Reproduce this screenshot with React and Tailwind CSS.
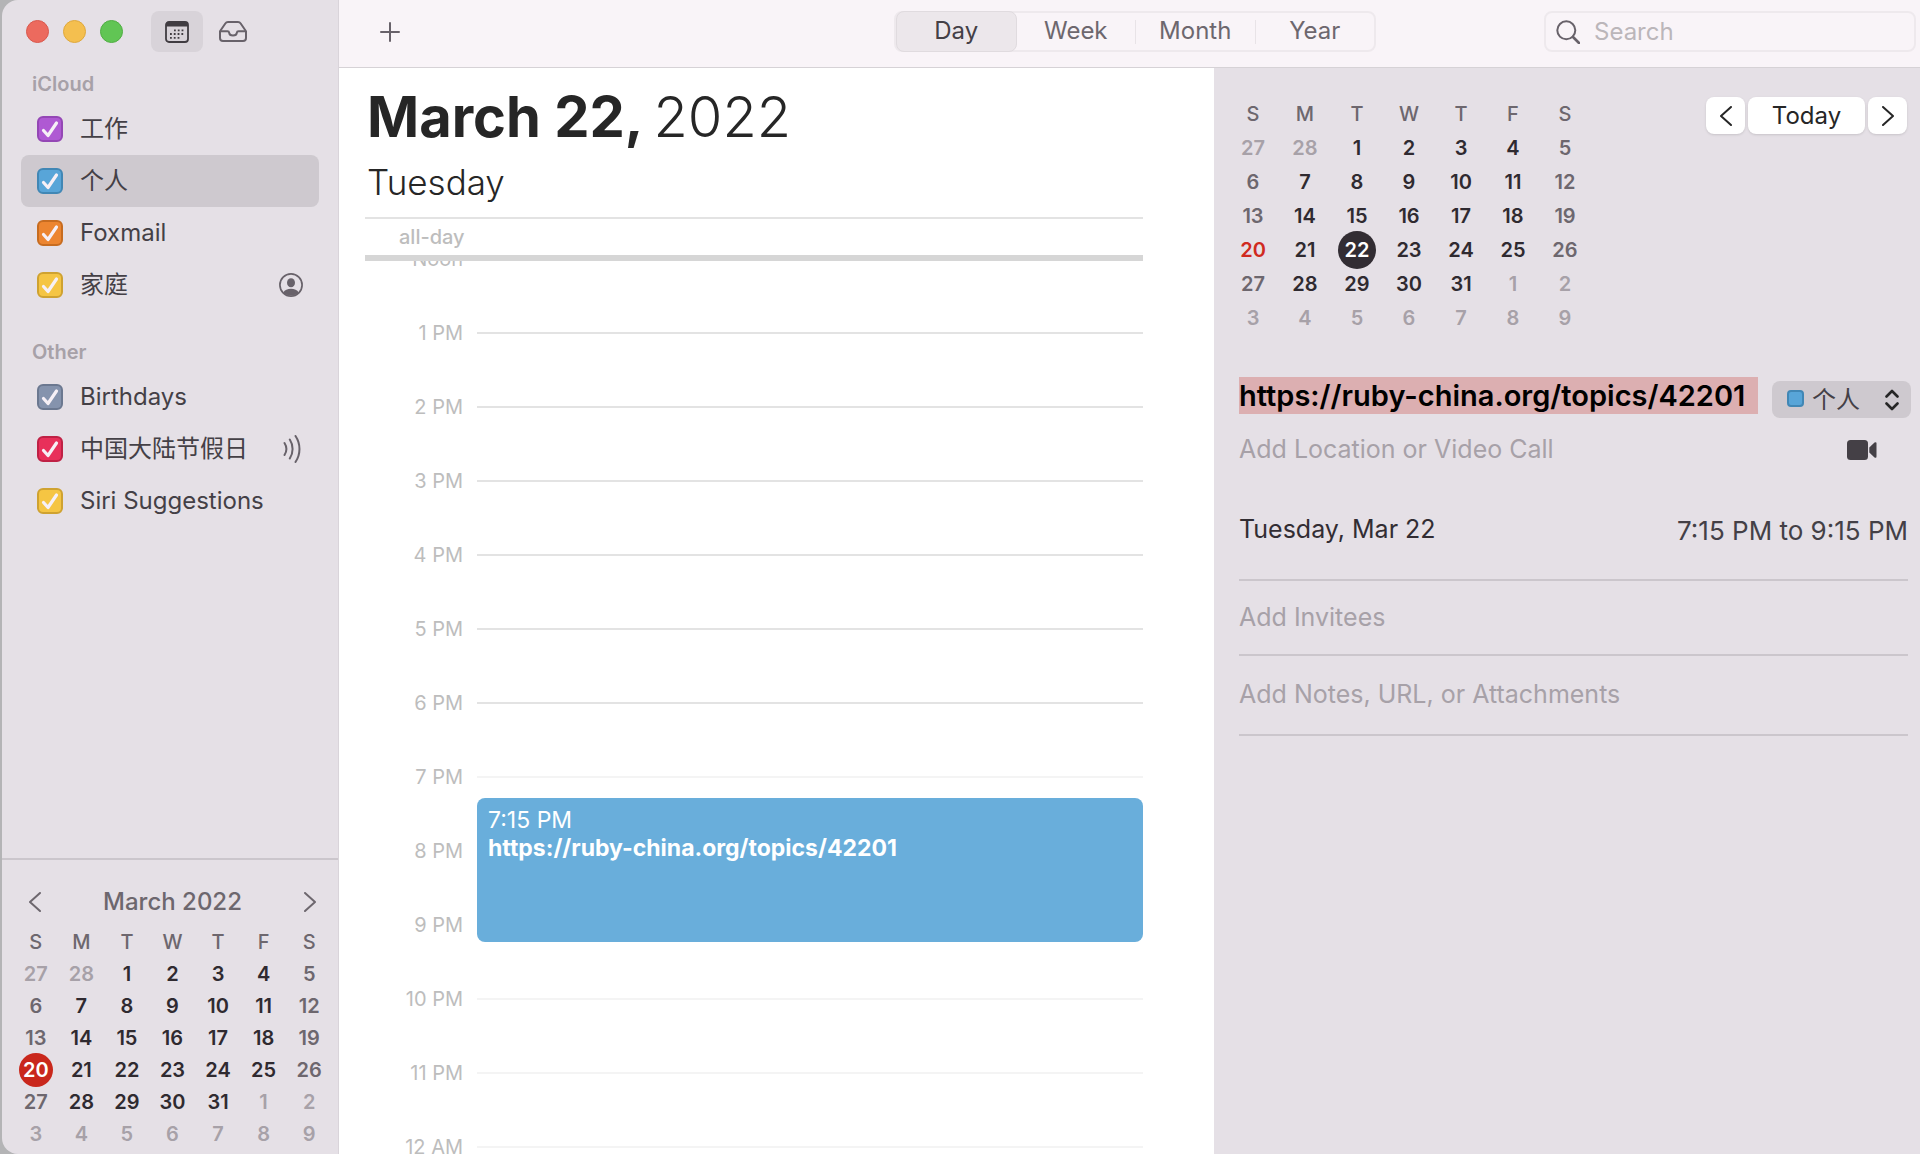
import React, { useState } from 'react';

const weekdays = ['S', 'M', 'T', 'W', 'T', 'F', 'S'];

// negative numbers are days of the neighbouring months
const weeks = [
  [-27, -28, 1, 2, 3, 4, 5],
  [6, 7, 8, 9, 10, 11, 12],
  [13, 14, 15, 16, 17, 18, 19],
  [20, 21, 22, 23, 24, 25, 26],
  [27, 28, 29, 30, 31, -1, -2],
  [-3, -4, -5, -6, -7, -8, -9]
];

const groups = [
  {
    name: 'iCloud',
    items: [
      { id: 'work', label: '工作', color: 'bg-[#af59d3] border-[#9447b5]' },
      { id: 'personal', label: '个人', color: 'bg-[#58a5d8] border-[#4187b5]', selected: true },
      { id: 'foxmail', label: 'Foxmail', color: 'bg-[#ec8530] border-[#c76c20]' },
      { id: 'family', label: '家庭', color: 'bg-[#f5c543] border-[#cfa230]', icon: 'person' }
    ]
  },
  {
    name: 'Other',
    items: [
      { id: 'birthdays', label: 'Birthdays', color: 'bg-[#8593ad] border-[#6b7890]' },
      { id: 'holidays', label: '中国大陆节假日', color: 'bg-[#e8305a] border-[#bf2145]', icon: 'waves' },
      { id: 'siri', label: 'Siri Suggestions', color: 'bg-[#f5c543] border-[#cfa230]' }
    ]
  }
];

const hours = ['Noon', '1 PM', '2 PM', '3 PM', '4 PM', '5 PM', '6 PM', '7 PM', '8 PM', '9 PM', '10 PM', '11 PM', '12 AM'];

const Chevron = ({ left, className }) => (
  <svg viewBox="0 0 12 20" fill="none" stroke="currentColor" strokeLinecap="round" strokeLinejoin="round" className={className}>
    <path d={left ? 'M11 1 1 10l10 9' : 'M1 1l10 9-10 9'} />
  </svg>
);

const PersonIcon = () => (
  <svg viewBox="0 0 24 24" className="size-6 mr-4 text-[#68626a]">
    <circle cx="12" cy="12" r="11.1" fill="none" stroke="currentColor" strokeWidth="1.7" />
    <ellipse cx="12" cy="9.8" rx="4" ry="4.5" fill="currentColor" />
    <path d="M4.3 19.4c1.4-2.4 4.3-3.6 7.7-3.6s6.3 1.2 7.7 3.6a11 11 0 0 1-15.4 0z" fill="currentColor" />
  </svg>
);

const WavesIcon = () => (
  <svg viewBox="0 0 20 28" fill="none" stroke="currentColor" strokeWidth="2" strokeLinecap="round" className="w-5 h-7 mr-4 text-[#68626a]">
    <path d="M1.500 8c2.300 3.600 2.300 8.400 0 12M6.800 4.500c3.700 5.700 3.700 13.300 0 19M12.500 1c5.300 7.800 5.300 18.200 0 26" />
  </svg>
);

const MiniCalendar = ({ large }) => {
  const dayClass = (day, col) => {
    if (large && day === 22) return 'size-[38px] -my-0.5 rounded-full bg-[#322d33] text-white';
    if (!large && day === 20) return 'size-[34px] -my-px rounded-full bg-[#c9271c] text-white';
    if (day === 20) return 'text-[#d02a20]';
    if (day < 0) return 'text-[#a7a1a8]';
    if (col === 0 || col === 6) return 'text-[#6d676e]';
    return 'text-[#2f2a30]';
  };

  return (
    <table className={`table-fixed text-center text-xl leading-6 font-semibold ${large ? 'w-[364px]' : 'w-full'}`}>
      <thead>
        <tr className={large ? 'h-[34px]' : 'h-8'}>
          {weekdays.map((name, i) => (
            <th key={i} className="p-0 font-medium text-[#6d676e]">{name}</th>
          ))}
        </tr>
      </thead>
      <tbody>
        {weeks.map((week, row) => (
          <tr key={row} className={large ? 'h-[34px]' : 'h-8'}>
            {week.map((day, col) => (
              <td key={col} className="p-0">
                <button className={`flex items-center justify-center mx-auto ${dayClass(day, col)}`}>
                  {Math.abs(day)}
                </button>
              </td>
            ))}
          </tr>
        ))}
      </tbody>
    </table>
  );
};

const CalendarRow = ({ item }) => (
  <li className={`flex items-center h-[52px] pl-4 rounded-lg ${item.selected ? 'bg-[#cec9cf]' : ''}`}>
    <label className="flex flex-1 items-center gap-[17px] text-[#444046]">
      <span className="relative size-[26px]">
        <input type="checkbox" defaultChecked className={`block size-[26px] appearance-none rounded-md border-2 ${item.color}`} />
        <svg viewBox="0 0 26 26" fill="none" stroke="#f6f0f6" strokeWidth="3.2" strokeLinecap="round" strokeLinejoin="round" className="absolute inset-0 pointer-events-none">
          <path d="M6.500 14.500l4.500 5L19.500 7" />
        </svg>
      </span>
      <span>{item.label}</span>
    </label>
    {item.icon === 'person' && <PersonIcon />}
    {item.icon === 'waves' && <WavesIcon />}
  </li>
);

const Sidebar = () => (
  <aside className="flex flex-col w-[337px] shrink-0 bg-[#e5e0e6] border-r border-[#d9d4da]">
    <div className="flex items-center h-[63px] pl-6">
      <div className="flex gap-[14px]">
        <button aria-label="Close" className="size-[23px] rounded-full bg-[#ec6a5e] border border-[#d9584d]" />
        <button aria-label="Minimize" className="size-[23px] rounded-full bg-[#f4bf4f] border border-[#dfa83c]" />
        <button aria-label="Zoom" className="size-[23px] rounded-full bg-[#61c554] border border-[#50ae43]" />
      </div>
      <button aria-label="Calendars" className="flex items-center justify-center w-[52px] h-[41px] ml-7 rounded-lg bg-[#d8d3d9] text-[#403c41]">
        <svg viewBox="0 0 24 22" className="w-6 h-[22px]">
          <rect x="1" y="1" width="22" height="20" rx="3" fill="none" stroke="currentColor" strokeWidth="1.8" />
          <path d="M1 3.500Q1 1 3.500 1h17Q23 1 23 3.500V5.600H1z" fill="currentColor" />
          <path d="M9 9.300h11M5 13h15M5 16.800h11" stroke="currentColor" strokeWidth="1.8" strokeDasharray="1.8 2" />
        </svg>
      </button>
      <button aria-label="Inbox" className="ml-4 text-[#68626a]">
        <svg viewBox="0 0 28 21" fill="none" stroke="currentColor" strokeWidth="2" strokeLinejoin="round" className="w-7 h-[21px]">
          <path d="M1 10.300 6.300 2.500Q7.300 1 9 1h10q1.700 0 2.700 1.500L27 10.300V17q0 3-3 3H4q-3 0-3-3z" />
          <path d="M1 10.300h7.500q1.500 0 1.700 1.500c.3 3.500 7.300 3.500 7.600 0q.2-1.500 1.700-1.500H27" />
        </svg>
      </button>
    </div>

    <nav className="flex-1 px-[19px] text-2xl">
      {groups.map((group) => (
        <section key={group.name} className="mb-5">
          <h2 className="h-10 pl-[11px] text-xl leading-[42px] font-semibold text-[#a7a1a8]">{group.name}</h2>
          <ul>
            {group.items.map((item) => (
              <CalendarRow key={item.id} item={item} />
            ))}
          </ul>
        </section>
      ))}
    </nav>

    <div className="pl-[11px] pr-1.5 pb-1 border-t-2 border-[#cbc6cc]">
      <div className="flex items-center justify-between h-[66px] px-4 pt-[18px] text-[#6d676e]">
        <button aria-label="Previous month">
          <Chevron left className="w-3 h-5 stroke-2" />
        </button>
        <h2 className="text-2xl font-medium">March 2022</h2>
        <button aria-label="Next month">
          <Chevron className="w-3 h-5 stroke-2" />
        </button>
      </div>
      <MiniCalendar />
    </div>
  </aside>
);

const Toolbar = () => {
  const [view, setView] = useState('Day');

  return (
    <header className="flex items-center h-[68px] pl-[15px] pr-1 pb-1 shrink-0 bg-[#f9f4f8] border-b border-[#d6d2d6] text-2xl">
      <div className="flex flex-1">
        <button aria-label="New event" className="ml-[26px] text-[#68626a]">
          <svg viewBox="0 0 20 20" stroke="currentColor" strokeWidth="2" strokeLinecap="round" className="size-5">
            <path d="M10 1v18M1 10h18" />
          </svg>
        </button>
      </div>
      <div className="flex items-center w-[482px] h-[41px] border-2 border-[#eee9ed] rounded-lg">
        {['Day', 'Week', 'Month', 'Year'].map((name, i) => (
          <React.Fragment key={name}>
            {i > 1 && <span className="w-px h-6 bg-[#e8e3e7]" />}
            <button
              onClick={() => setView(name)}
              className={`flex-1 h-[41px] pb-0.5 rounded-lg ${
                view === name ? 'bg-[#ece7eb] border border-[#e0dbdf] text-[#444046]' : 'text-[#6d676e]'
              }`}
            >
              {name}
            </button>
          </React.Fragment>
        ))}
      </div>
      <div className="flex flex-1 justify-end">
        <label className="flex items-center gap-[14px] w-[372px] h-[41px] px-[10px] border-2 border-[#eee9ed] rounded-lg">
          <svg viewBox="0 0 24 24" fill="none" stroke="#68626a" strokeLinecap="round" className="size-6 shrink-0">
            <circle cx="10.3" cy="10.3" r="9" strokeWidth="2" />
            <path d="M17 17l6 6" strokeWidth="2.6" />
          </svg>
          <input type="search" aria-label="Search" placeholder="Search" className="flex-1 min-w-0 bg-transparent outline-none placeholder:text-[#bbb6ba]" />
        </label>
      </div>
    </header>
  );
};

const DayView = () => (
  <main className="flex flex-col flex-1 min-w-0 pl-[26px] pr-[71px] bg-white text-[#262626]">
    <h1 className="flex gap-2.5 pt-4 pl-0.5 text-[56px] leading-[66px] font-light">
      <strong className="font-bold">March 22,</strong>
      <span>2022</span>
    </h1>
    <p className="h-[67px] pl-0.5 text-[35px] leading-[64px] font-light">Tuesday</p>
    <div className="h-[38px] pl-[34px] border-t-2 border-[#e3e3e3] text-xl leading-9 font-medium text-[#bdbdbd]">all-day</div>
    <div className="h-1.5 shrink-0 bg-[#d6d6d6]" />
    <div className="flex-1 min-h-0 overflow-hidden">
      <div className="relative -mt-[39px]">
        {hours.map((hour, i) => (
          <div key={hour} className="flex items-center gap-[14px] h-[74px]">
            <span className="w-[98px] text-right text-xl text-[#bdbdbd]">{hour}</span>
            {i > 0 && <span className={`flex-1 h-0.5 ${i < 7 ? 'bg-[#e3e3e3]' : 'bg-[#f4f4f4]'}`} />}
          </div>
        ))}
        <article className="absolute top-[576px] left-28 right-0 h-36 px-[11px] pt-2 rounded-lg bg-[#69aedb] text-white text-[23px] leading-7">
          <p>7:15 PM</p>
          <h3 className="font-bold">https://ruby-china.org/topics/42201</h3>
        </article>
      </div>
    </div>
  </main>
);

const Inspector = () => (
  <aside className="w-[706px] shrink-0 pl-[25px] pr-[9px] bg-[#e5e0e6] text-[25px]">
    <div className="flex items-start justify-between pt-[29px] pr-1">
      <div className="-ml-3">
        <MiniCalendar large />
      </div>
      <div className="flex gap-[3px] text-2xl text-[#262626]">
        <button aria-label="Previous day" className="flex items-center justify-center w-[39px] h-[37px] rounded-lg bg-white shadow-sm">
          <Chevron left className="w-3 h-5 stroke-2" />
        </button>
        <button className="w-[117px] h-[37px] rounded-lg bg-white shadow-sm">Today</button>
        <button aria-label="Next day" className="flex items-center justify-center w-[39px] h-[37px] rounded-lg bg-white shadow-sm">
          <Chevron className="w-3 h-5 stroke-2" />
        </button>
      </div>
    </div>

    <div className="flex items-start gap-[14px] mt-[42px]">
      <input
        aria-label="Event title"
        defaultValue="https://ruby-china.org/topics/42201"
        className="flex-1 min-w-0 h-[37px] bg-[#dcafb1] text-[29px] font-semibold text-black outline-none"
      />
      <div className="relative mt-1 text-[#444046]">
        <select aria-label="Calendar" className="block w-[139px] h-[37px] pl-10 appearance-none rounded-lg bg-[#cec9cf] text-2xl leading-9">
          <option>个人</option>
        </select>
        <span className="absolute left-[15px] top-[9px] size-[17px] rounded-sm border-2 border-[#4187b5] bg-[#58a5d8] pointer-events-none" />
        <svg viewBox="0 0 14 22" fill="none" stroke="#262626" strokeWidth="2.6" strokeLinecap="round" strokeLinejoin="round" className="absolute right-3 top-2 w-3.5 h-[22px] pointer-events-none">
          <path d="M1.500 7.500 7 2l5.500 5.500M1.500 14.500 7 20l5.500-5.500" />
        </svg>
      </div>
    </div>

    <div className="flex items-center justify-between h-[63px] pr-[34px]">
      <input aria-label="Location" placeholder="Add Location or Video Call" className="flex-1 min-w-0 bg-transparent outline-none placeholder:text-[#a7a1a8]" />
      <button aria-label="Video call">
        <svg viewBox="0 0 30 20" fill="#444046" className="w-[30px] h-5">
          <rect x="0" y="0" width="21" height="20" rx="3.5" />
          <path d="M22.300 7.500 27.500 2.600Q29.500 1.400 29.500 3.500v13q0 2.100-2 .9L22.300 12.500z" />
        </svg>
      </button>
    </div>

    <div className="flex items-center justify-between h-[100px] mr-[3px] border-b-2 border-[#cbc6cc]">
      <span className="text-[#322d33]">Tuesday, Mar 22</span>
      <span className="text-[26px] text-[#444046]">7:15 PM to 9:15 PM</span>
    </div>
    <div className="flex items-center h-[75px] mr-[3px] border-b-2 border-[#cbc6cc]">
      <input aria-label="Invitees" placeholder="Add Invitees" className="w-full bg-transparent outline-none placeholder:text-[#a7a1a8]" />
    </div>
    <div className="flex items-center h-20 mr-[3px] border-b-2 border-[#cbc6cc]">
      <input aria-label="Notes" placeholder="Add Notes, URL, or Attachments" className="w-full bg-transparent outline-none placeholder:text-[#a7a1a8]" />
    </div>
  </aside>
);

const App = () => (
  <div className="h-screen pl-0.5 bg-[#b4b4b6] font-[Inter,'Noto_Sans_CJK_SC',sans-serif]">
    <div className="flex h-full overflow-hidden rounded-l-2xl">
      <Sidebar />
      <div className="flex flex-col flex-1 min-w-0">
        <Toolbar />
        <div className="flex flex-1 min-h-0">
          <DayView />
          <Inspector />
        </div>
      </div>
    </div>
  </div>
);

export default App;
